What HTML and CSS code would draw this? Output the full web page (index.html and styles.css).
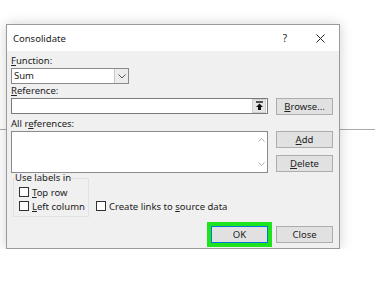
FILE: index.html
```html
<!DOCTYPE html>
<html lang="en">
<head>
    <meta charset="UTF-8">
    <title>Consolidate</title>
    <link rel="stylesheet" href="styles.css">
</head>
<body>
<div class="bg-line"></div>
<div class="dialog">
    <div class="titlebar">
        <span class="title">Consolidate</span>
        <span class="help">?</span>
        <span class="close-x">
            <svg width="9" height="9" viewBox="0 0 9 9"><path d="M0.5 0.5 L8.5 8.5 M8.5 0.5 L0.5 8.5" stroke="#222" stroke-width="1" fill="none"/></svg>
        </span>
    </div>

    <div class="content">
        <div class="label lbl-func"><u>F</u>unction:</div>
        <div class="select">
            <span class="select-text">Sum</span>
            <span class="select-btn">
                <svg width="8" height="5" viewBox="0 0 8 5"><path d="M0.5 0.5 L4 4 L7.5 0.5" stroke="#555" stroke-width="1" fill="none"/></svg>
            </span>
        </div>

        <div class="label lbl-ref"><u>R</u>eference:</div>
        <div class="row">
            <div class="input">
                <span class="pick-btn">
                    <svg width="9" height="10" viewBox="0 0 9 10"><path d="M1 1 H8" stroke="#111" stroke-width="1.4"/><path d="M4.5 2.5 L8 6 H6 V9 H3 V6 H1 Z" fill="#111"/></svg>
                </span>
            </div>
            <button class="btn"><u>B</u>rowse...</button>
        </div>

        <div class="label lbl-all">All r<u>e</u>ferences:</div>
        <div class="row">
            <div class="textarea">
                <span class="scroll">
                    <svg width="7" height="4" viewBox="0 0 7 4"><path d="M0.5 3.5 L3.5 0.5 L6.5 3.5" stroke="#aaa" stroke-width="1" fill="none"/></svg>
                    <svg width="7" height="4" viewBox="0 0 7 4"><path d="M0.5 0.5 L3.5 3.5 L6.5 0.5" stroke="#aaa" stroke-width="1" fill="none"/></svg>
                </span>
            </div>
            <div class="side-btns">
                <button class="btn"><u>A</u>dd</button>
                <button class="btn"><u>D</u>elete</button>
            </div>
        </div>

        <div class="options">
            <fieldset class="group">
                <legend>Use labels in</legend>
                <label class="check"><span class="box"></span><span><u>T</u>op row</span></label>
                <label class="check"><span class="box"></span><span><u>L</u>eft column</span></label>
            </fieldset>
            <label class="check links"><span class="box"></span><span>Create links to <u>s</u>ource data</span></label>
        </div>

        <div class="footer">
            <button class="btn ok">OK</button>
            <button class="btn">Close</button>
        </div>
    </div>
</div>
</body>
</html>
```

FILE: styles.css
```css
body {
    margin: 0;
    background: #fff;
    font-family: "Noto Sans", "Open Sans", sans-serif;
    font-size: 9.5px;
    color: #222;
    overflow: hidden;
}

.bg-line {
    position: absolute;
    left: 0;
    right: 0;
    top: 129px;
    height: 1px;
    background: #aaa;
}

.dialog {
    position: relative;
    width: 332px;
    margin: 24px 0 0 6px;
    background: #f0f0f0;
    border: 1px solid #9a9a9a;
    box-shadow: 0 0 12px rgba(0, 0, 0, 0.18);
}

.titlebar {
    height: 26px;
    background: #fff;
    display: flex;
    align-items: center;
    padding-left: 6px;
}

.title {
    flex: 1;
    font-size: 9.5px;
}

.help {
    width: 10px;
    margin-right: 26px;
    font-size: 10px;
    text-align: center;
}

.close-x {
    display: flex;
    margin-right: 14px;
}

.content {
    padding: 4px 6px 5px 4px;
}

.label {
    height: 12px;
    line-height: 12px;
}

.lbl-ref {
    margin-top: 1px;
}

.lbl-all {
    margin-top: 3px;
}

.select {
    margin-top: 1px;
    width: 118px;
    height: 16px;
    box-sizing: border-box;
    border: 1px solid #8a8a8a;
    background: #fff;
    display: flex;
}

.select-text {
    flex: 1;
    padding-left: 2px;
    line-height: 14px;
}

.select-btn {
    width: 13px;
    background: #ececec;
    border-left: 1px solid #c8c8c8;
    display: flex;
    align-items: center;
    justify-content: center;
}

.row {
    display: flex;
    gap: 8px;
    margin-top: 1px;
}

.input {
    width: 258px;
    height: 16px;
    box-sizing: border-box;
    border: 1px solid #7a7a7a;
    background: #fff;
    display: flex;
    justify-content: flex-end;
    align-items: center;
}

.pick-btn {
    width: 12px;
    height: 12px;
    margin-right: 1px;
    background: #e6e6e6;
    border: 1px solid #d0d0d0;
    display: flex;
    align-items: center;
    justify-content: center;
}

.btn {
    width: 57px;
    height: 17px;
    padding: 0;
    box-sizing: border-box;
    border: 1px solid #adadad;
    background: #e1e1e1;
    font-family: inherit;
    font-size: 9.5px;
    color: #222;
    line-height: 15px;
}

.textarea {
    width: 258px;
    height: 42px;
    box-sizing: border-box;
    border: 1px solid #8a8a8a;
    background: #fff;
    display: flex;
    justify-content: flex-end;
}

.scroll {
    width: 12px;
    display: flex;
    flex-direction: column;
    justify-content: space-between;
    align-items: center;
    padding: 6px 0 6px;
}

.side-btns {
    display: flex;
    flex-direction: column;
    gap: 7px;
}

.options {
    display: flex;
    align-items: flex-end;
    gap: 7px;
    margin-top: -1px;
}

.group {
    margin: 0 0 0 2px;
    padding: 1px 0 3px 5px;
    width: 69px;
    border: 1px solid #e2e2e2;
}

.group legend {
    padding: 0;
    margin-left: -4px;
    line-height: 12px;
}

.check {
    display: flex;
    align-items: center;
    height: 14px;
    gap: 3px;
}

.box {
    width: 10px;
    height: 10px;
    box-sizing: border-box;
    border: 1px solid #333;
    background: #fff;
}

.links {
    margin-bottom: 4px;
}

.footer {
    display: flex;
    justify-content: flex-end;
    gap: 8px;
    margin-top: 9px;
}

.btn.ok {
    border-color: #0078d7;
    outline: 4px solid #1de41d;
}
```
